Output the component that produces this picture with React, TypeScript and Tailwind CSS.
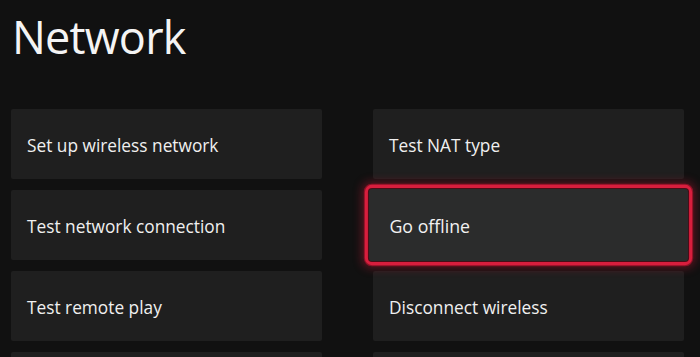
import React from "react";

const left = ["Set up wireless network", "Test network connection", "Test remote play", ""];
const right = ["Test NAT type", "Go offline", "Disconnect wireless", ""];

function Tile({ label, focused }: { label: string; focused?: boolean }) {
  if (focused) {
    return (
      <div className="relative z-10 flex h-[70px] scale-x-[1.026] scale-y-[1.03] items-center rounded-[3px] bg-[#2b2c2c] pl-[20px] pt-[3px] shadow-[0_0_0_1px_#4a0d17,0_0_0_4px_#d81e3d,0_0_0_5px_#8a1226,0_0_9px_6px_rgba(210,25,55,0.4)]">
        <span className="text-[17.3px] text-[#f2f2f2]">{label}</span>
      </div>
    );
  }
  return (
    <div className="flex h-[70px] items-center rounded-[2px] bg-[#1f1f1f] pl-4 pt-[3px]">
      <span className="text-[17.3px] text-[#f0f0f0]">{label}</span>
    </div>
  );
}

export default function App() {
  return (
    <div
      className="h-[357px] w-[700px] overflow-hidden bg-[#111111] pl-[11px]"
      style={{ fontFamily: '"Open Sans", "Noto Sans", sans-serif' }}
    >
      <h1 className="pl-[1px] pt-[14px] text-[45px] leading-none tracking-[-0.8px] text-[#f4f4f4]">Network</h1>
      <div className="mt-[50px] grid grid-cols-[311px_311px] gap-x-[51px] gap-y-[11px]">
        {left.map((l, i) => (
          <React.Fragment key={i}>
            <Tile label={l} />
            <Tile label={right[i]} focused={i === 1} />
          </React.Fragment>
        ))}
      </div>
    </div>
  );
}
